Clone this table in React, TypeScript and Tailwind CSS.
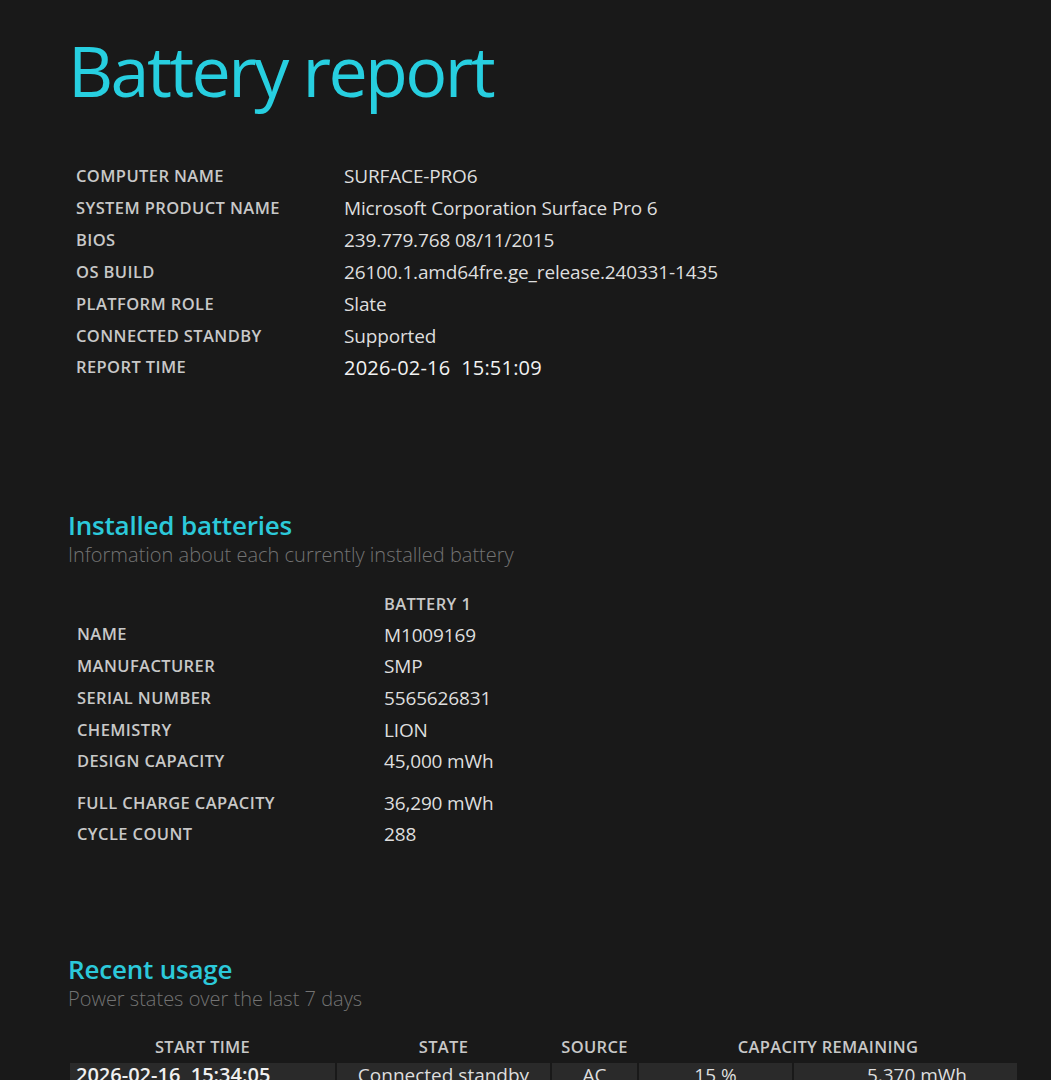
const systemInfo = [
  ["COMPUTER NAME", "SURFACE-PRO6"],
  ["SYSTEM PRODUCT NAME", "Microsoft Corporation Surface Pro 6"],
  ["BIOS", "239.779.768 08/11/2015"],
  ["OS BUILD", "26100.1.amd64fre.ge_release.240331-1435"],
  ["PLATFORM ROLE", "Slate"],
  ["CONNECTED STANDBY", "Supported"],
  ["REPORT TIME", "2026-02-16  15:51:09"],
];

const batteryInfo = [
  ["NAME", "M1009169"],
  ["MANUFACTURER", "SMP"],
  ["SERIAL NUMBER", "5565626831"],
  ["CHEMISTRY", "LION"],
  ["DESIGN CAPACITY", "45,000 mWh"],
];

const SectionHead = ({ title, sub }: { title: string; sub: string }) => (
  <div>
    <h2 className="text-[26px] leading-[32px] font-semibold text-[#2cc9da] tracking-[-0.2px]">{title}</h2>
    <p className="text-[20px] leading-[28px] font-light text-[#737373]">{sub}</p>
  </div>
);

const label = "text-[16.5px] font-semibold text-[#c8c8c8] tracking-[0.4px]";
const value = "text-[19px] text-[#dedede] tracking-[-0.15px] whitespace-pre";

export default function App() {
  return (
    <div
      className="min-h-screen bg-[#191919] pl-[68px] pr-8 pb-10 text-[#dcdcdc]"
      style={{ fontFamily: '"Open Sans", "Noto Sans", sans-serif' }}
    >
      <h1 className="pt-[24px] text-[70px] leading-[92px] font-normal text-[#27cfe0] tracking-[-2.6px]">
        Battery report
      </h1>

      <table className="mt-[44px] border-collapse">
        <tbody>
          {systemInfo.map(([l, v], i) => (
            <tr key={l} className={i === 6 ? "h-[31px]" : "h-[32px]"}>
              <td className={"w-[276px] pl-2 " + label}>{l}</td>
              <td
                className={
                  i === 6
                    ? "text-[20px] text-[#f2f2f2] tracking-[0.2px] whitespace-pre"
                    : value
                }
              >
                {v}
              </td>
            </tr>
          ))}
        </tbody>
      </table>

      <div className="mt-[126px]">
        <SectionHead title="Installed batteries" sub="Information about each currently installed battery" />
      </div>

      <table className="mt-[20px] border-collapse">
        <tbody>
          <tr className="h-[30px]">
            <td className="w-[316px]"></td>
            <td className={label}>BATTERY 1</td>
          </tr>
          {batteryInfo.map(([l, v]) => (
            <tr key={l} className="h-[31.7px]">
              <td className={"pl-[9px] " + label}>{l}</td>
              <td className={value}>{v}</td>
            </tr>
          ))}
          <tr className="h-[10px]">
            <td></td>
            <td></td>
          </tr>
          <tr className="h-[31px]">
            <td className={"pl-[9px] " + label}>FULL CHARGE CAPACITY</td>
            <td className={value}>36,290 mWh</td>
          </tr>
          <tr className="h-[31px]">
            <td className={"pl-[9px] " + label}>CYCLE COUNT</td>
            <td className={value}>288</td>
          </tr>
        </tbody>
      </table>

      <div className="mt-[104px]">
        <SectionHead title="Recent usage" sub="Power states over the last 7 days" />
      </div>

      <table className="mt-[17px] border-separate border-spacing-[2px] text-[19px]">
        <thead>
          <tr className="h-[29px] text-[16.5px] text-[#c8c8c8]">
            <th className="w-[265px] text-center font-semibold tracking-[0.3px]">START TIME</th>
            <th className="w-[213px] text-center font-semibold tracking-[0.3px]">STATE</th>
            <th className="w-[85px] text-center font-semibold tracking-[0.3px]">SOURCE</th>
            <th colSpan={2} className="text-center font-semibold tracking-[0.3px]">CAPACITY REMAINING</th>
          </tr>
        </thead>
        <tbody>
          <tr className="h-[34px] bg-[#2a2a2a] align-top leading-[24px]">
            <td className="px-[6px] text-[20px] font-semibold text-[#f0f0f0] whitespace-pre">2026-02-16  15:34:05</td>
            <td className="text-center text-[#dedede]">Connected standby</td>
            <td className="text-center text-[#dedede]">AC</td>
            <td className="w-[153px] text-center text-[#dedede]">15 %</td>
            <td className="w-[223px] pr-[50px] text-right text-[#dedede]">5,370 mWh</td>
          </tr>
        </tbody>
      </table>
    </div>
  );
}
